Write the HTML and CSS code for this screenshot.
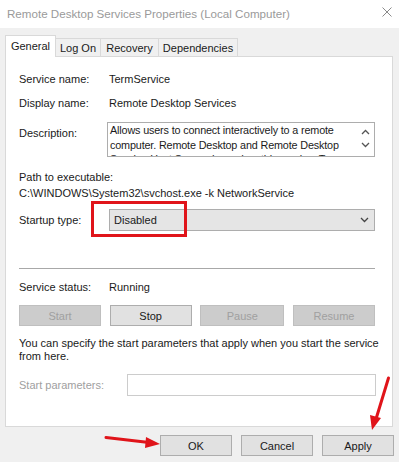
FILE: index.html
```html
<!DOCTYPE html>
<html lang="en">
<head>
    <meta charset="UTF-8">
    <title>Remote Desktop Services Properties (Local Computer)</title>
    <link rel="stylesheet" href="styles.css">
</head>
<body>
    <div class="window">
        <!-- Title bar -->
        <div class="titlebar">
            <span class="title">Remote Desktop Services Properties (Local Computer)</span>
            <svg class="close-icon" width="10" height="10" viewBox="0 0 10 10">
                <path d="M0.5 0.5 L9.5 9.5 M9.5 0.5 L0.5 9.5" stroke="#8a8a8a" stroke-width="1" fill="none"/>
            </svg>
        </div>

        <div class="dialog">
            <div class="tabs">
                <div class="tab active tab-general">General</div>
                <div class="tab tab-logon">Log On</div>
                <div class="tab tab-recovery">Recovery</div>
                <div class="tab tab-deps">Dependencies</div>
            </div>

            <div class="panel">
                <div class="row">
                    <span class="label">Service name:</span>
                    <span class="value">TermService</span>
                </div>
                <div class="row row-gap">
                    <span class="label">Display name:</span>
                    <span class="value">Remote Desktop Services</span>
                </div>
                <div class="row row-desc">
                    <span class="label desc-label">Description:</span>
                    <div class="desc-box">
                        <div class="desc-text">Allows users to connect interactively to a remote<br>computer. Remote Desktop and Remote Desktop<br>Session Host Server depend on this service.  To</div>
                        <div class="desc-scroll">
                            <svg width="9" height="6" viewBox="0 0 9 6"><path d="M1 5 L4.5 1.5 L8 5" stroke="#555" stroke-width="1.3" fill="none"/></svg>
                            <svg width="9" height="6" viewBox="0 0 9 6"><path d="M1 1 L4.5 4.5 L8 1" stroke="#555" stroke-width="1.3" fill="none"/></svg>
                        </div>
                    </div>
                </div>
                <div class="path-block">
                    <div class="line">Path to executable:</div>
                    <div class="line">C:\WINDOWS\System32\svchost.exe -k NetworkService</div>
                </div>
                <div class="row row-combo">
                    <span class="label">Startup type:</span>
                    <div class="combo">
                        <span>Disabled</span>
                        <svg width="9" height="6" viewBox="0 0 9 6"><path d="M1 1 L4.5 4.5 L8 1" stroke="#444" stroke-width="1.3" fill="none"/></svg>
                    </div>
                </div>

                <div class="separator"></div>

                <div class="row row-status">
                    <span class="label">Service status:</span>
                    <span class="value">Running</span>
                </div>
                <div class="service-buttons">
                    <button class="btn disabled">Start</button>
                    <button class="btn">Stop</button>
                    <button class="btn disabled">Pause</button>
                    <button class="btn disabled">Resume</button>
                </div>

                <p class="note">You can specify the start parameters that apply when you start the service from here.</p>

                <div class="row row-params">
                    <span class="label params-label">Start parameters:</span>
                    <div class="params-input"></div>
                </div>
            </div>

            <div class="footer">
                <button class="btn footer-btn">OK</button>
                <button class="btn footer-btn">Cancel</button>
                <button class="btn footer-btn">Apply</button>
            </div>
        </div>

        <!-- Red annotations drawn over the screenshot -->
        <svg class="annotations" width="399" height="462" viewBox="0 0 399 462">
            <rect x="92.5" y="202.5" width="93" height="33" fill="none" stroke="#e0141a" stroke-width="3"/>
            <line x1="106" y1="437.5" x2="149" y2="442.5" stroke="#e0141a" stroke-width="3" stroke-linecap="round"/>
            <polygon points="160,444 146,437 145,448" fill="#e0141a"/>
            <line x1="388.5" y1="378" x2="376" y2="419" stroke="#e0141a" stroke-width="3" stroke-linecap="round"/>
            <polygon points="372,430 370,415 381,418" fill="#e0141a"/>
        </svg>
    </div>
</body>
</html>
```

FILE: styles.css
```css
/* Windows 10 service properties dialog */
body {
    margin: 0;
    padding: 0;
    font-family: 'Liberation Sans', Arial, sans-serif;
    font-size: 11px;
    color: #1a1a1a;
    background-color: #f0f0f0;
}

.window {
    position: relative;
    width: 399px;
    height: 462px;
    overflow: hidden;
}

/* Title bar */
.titlebar {
    height: 28px;
    background-color: #fff;
    display: flex;
    align-items: center;
    justify-content: space-between;
    padding: 0 7px 2px 7px;
    box-sizing: border-box;
}

.title {
    font-size: 11.6px;
    color: #9a9a9a;
}

.close-icon {
    margin-top: -3px;
}

/* Tabs */
.dialog {
    padding: 7px 6px 0 5px;
}

.tabs {
    display: flex;
    align-items: flex-end;
    height: 21px;
}

.tab {
    height: 18px;
    border: 1px solid #d9d9d9;
    border-bottom: none;
    border-left: none;
    background-color: #f0f0f0;
    display: flex;
    align-items: center;
    justify-content: center;
    box-sizing: border-box;
}

.tab.active {
    height: 22px;
    margin-bottom: -1px;
    padding-bottom: 2px;
    border-left: 1px solid #d9d9d9;
    background-color: #fff;
    position: relative;
    z-index: 1;
}

.tab-general { width: 51px; }
.tab-logon { width: 45px; }
.tab-recovery { width: 58px; }
.tab-deps { width: 79px; }

.panel {
    height: 371px;
    box-sizing: border-box;
    background-color: #fff;
    border: 1px solid #d9d9d9;
    padding: 14px 17px 0 13px;
}

/* Label / value rows */
.row {
    display: flex;
    align-items: center;
    line-height: 16px;
}

.label {
    width: 90px;
    flex-shrink: 0;
}

.row-gap {
    margin-top: 8px;
}

.row-desc {
    margin-top: 11px;
    align-items: flex-start;
}

.desc-label {
    margin-top: 3px;
    width: 88px;
}

.desc-box {
    flex: 1;
    height: 35px;
    box-sizing: border-box;
    border: 1px solid #adadad;
    display: flex;
    overflow: hidden;
}

.desc-text {
    flex: 1;
    height: 33px;
    overflow: hidden;
    padding: 0 4px 0 2px;
    line-height: 14.5px;
    font-size: 10.8px;
    letter-spacing: -0.15px;
    white-space: nowrap;
}

.desc-scroll {
    width: 17px;
    display: flex;
    flex-direction: column;
    align-items: center;
    gap: 7px;
    padding-top: 6px;
}

.path-block {
    margin-top: 12px;
    line-height: 16px;
}

.row-combo {
    margin-top: 8px;
}

.combo {
    flex: 1;
    height: 22px;
    box-sizing: border-box;
    background-color: #e5e5e5;
    border: 1px solid #adadad;
    display: flex;
    align-items: center;
    justify-content: space-between;
    padding: 0 5px 0 4px;
}

.separator {
    margin-top: 37px;
    height: 1px;
    background-color: #a8a8a8;
}

.row-status {
    margin-top: 10px;
}

/* Buttons */
.service-buttons {
    margin-top: 10px;
    display: grid;
    grid-template-columns: 82px 82px 84px 82px;
    justify-content: space-between;
}

.btn {
    font-family: 'Liberation Sans', Arial, sans-serif;
    font-size: 11px;
    color: #1a1a1a;
    height: 21px;
    padding: 0;
    background-color: #e1e1e1;
    border: 1px solid #adadad;
    border-radius: 0;
}

.btn.disabled {
    color: #a0a0a0;
    background-color: #cccccc;
    border-color: #bfbfbf;
}

.note {
    margin: 11px -12px 0 0;
    line-height: 13px;
}

.row-params {
    margin-top: 11px;
}

.params-label {
    width: 108px;
    color: #a0a0a0;
}

.params-input {
    flex: 1;
    height: 22px;
    box-sizing: border-box;
    border: 1px solid #cccccc;
    margin-right: -1px;
}

.footer {
    display: flex;
    justify-content: flex-end;
    gap: 9px;
    margin-top: 8px;
    margin-right: -1px;
}

.footer-btn {
    width: 72px;
}

/* Overlay */
.annotations {
    position: absolute;
    left: 0;
    top: 0;
    pointer-events: none;
}
```
